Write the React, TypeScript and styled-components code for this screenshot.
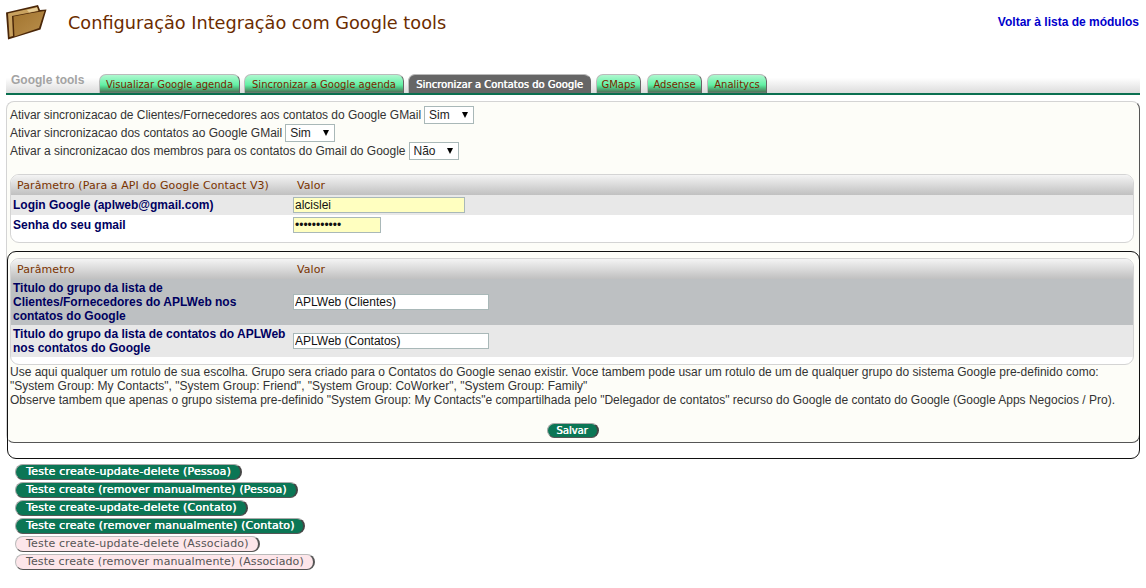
import React from "react";
import styled, { createGlobalStyle } from "styled-components";

const Global = createGlobalStyle`
  html, body { margin: 0; padding: 0; background: #fff; }
  body { font-family: "Liberation Sans", Arial, sans-serif; font-size: 12px; color: #333; }
`;
const Page = styled.div`
  width: 1146px; height: 588px; overflow: hidden; position: relative;
`;
const Header = styled.header`
  height: 71px; display: flex; align-items: flex-start; padding: 4px 7px 0 6px; box-sizing: border-box;
`;
const Logo = styled.svg`
  width: 41px; height: 36px; flex: none;
`;
const Title = styled.h1`
  margin: 7px 0 0 21px; font: normal 17.72px/24px "DejaVu Sans", sans-serif; color: #6b2c00;
`;
const BackLink = styled.a`
  margin: 11px 0 0 auto; font: bold 12px/15px "Liberation Sans", sans-serif; color: #0000cc; text-decoration: none;
`;
const TabBar = styled.nav`
  display: flex; align-items: flex-end; height: 22px; margin: 0 6px; padding-left: 5px;
  border-bottom: 2px solid #0a7050; background: linear-gradient(#fff 0%, #fff 30%, #dcdcdc 100%);
`;
const TabTitle = styled.span`
  font: bold 12px/15px "Liberation Sans", sans-serif; color: #a3a3a3; width: 88px; align-self: flex-start; margin-top: 2px;
`;
const Tab = styled.a<{ $active?: boolean; $w: number; $gap: number }>`
  box-sizing: border-box; width: ${p => p.$w}px; margin-right: ${p => p.$gap}px; height: 19px; text-align: center;
  border-radius: 7px 7px 0 0; border: 1px solid #bbb; border-bottom: 0; border-right-color: #666;
  font: normal 10px/20px "DejaVu Sans", sans-serif;
  white-space: nowrap; overflow: hidden;
  color: ${p => (p.$active ? "#fff" : "#7a1f00")};
  text-shadow: ${p => (p.$active ? "0.4px 0 0 #fff" : "none")};
  background: ${p => (p.$active ? "#666" : "linear-gradient(#b0f8d0 0%, #62f0a4 55%, #50c080 72%, #50805f 92%, #777 100%)")};
`;
const Panel = styled.section`
  position: relative; box-sizing: border-box; height: 342px; margin: 6px 6px 0;
  padding: 4px 5px 0 3px; background: #fdfdf8; border: 1px solid #d4d4d4; border-right-color: #555; border-bottom-color: #555;
  border-radius: 8px;
`;
const OptionRow = styled.div<{ $ls?: number }>`
  height: 18px; display: flex; align-items: center; gap: 3px; color: #333; letter-spacing: ${p => p.$ls ?? 0}px;
`;
const SelectWrap = styled.div`
  position: relative; width: 50px; height: 18px; letter-spacing: 0;
  &::after {
    content: ""; position: absolute; right: 6px; top: 6px; width: 0; height: 0;
    border-left: 3.5px solid transparent; border-right: 3.5px solid transparent; border-top: 6px solid #000; pointer-events: none;
  }
`;
const Select = styled.select`
  appearance: none; width: 100%; height: 100%; box-sizing: border-box; padding: 0 0 0 4px; border: 1px solid #a9b8b8; background: #fff;
  font: 12px "Liberation Sans", sans-serif; color: #222; border-radius: 0;
`;
const ParamTable = styled.div<{ $h: number; $mt: number }>`
  box-sizing: border-box; height: ${p => p.$h}px; margin-top: ${p => p.$mt}px; border: 1px solid #d4d4d4; border-radius: 9px; background: #fff; overflow: hidden;
`;
const THead = styled.div`
  height: 20px; display: grid; grid-template-columns: 280px 1fr; align-items: center; padding-left: 6px;
  background: linear-gradient(#f4f4f4 0%, #c0c0c0 100%);
  font: 11px/22px "DejaVu Sans", sans-serif; letter-spacing: 0.09px; color: #7a3300;
`;
const Row = styled.div<{ $bg: string; $h: number }>`
  height: ${p => p.$h}px; display: grid; grid-template-columns: 281px 1fr; align-items: center; background: ${p => p.$bg}; padding-left: 1px;
`;
const Label = styled.div`
  font: bold 12px/14px "Liberation Sans", sans-serif; color: #000060; padding-left: 1px; width: 278px;
`;
const Input = styled.input<{ $w: number; $bg: string }>`
  box-sizing: border-box; width: ${p => p.$w}px; height: 16px; padding: 0 1px; border: 1px solid #a9b8b8; background: ${p => p.$bg};
  font: 12px "Liberation Sans", sans-serif; color: #111; border-radius: 0; outline: 0;
`;
const DarkBox = styled.div`
  position: relative; box-sizing: border-box; height: 208px; margin: 8px -6px 0 -3px; padding: 6px 5px 0 2px;
  border: 1px solid #111; border-radius: 9px;
`;
const Notes = styled.p`
  margin: 0; font: 12px/14px "Liberation Sans", sans-serif; color: #333; width: 1125px;
`;
const SaveRow = styled.div`
  display: flex; justify-content: center; margin-top: 16px; padding-left: 1px;
`;
const PillButton = styled.button<{ $pink?: boolean; $ls?: number }>`
  box-sizing: border-box; height: 16px; padding: 0 9px 0 10px; border-radius: 8px; cursor: pointer;
  display: block; white-space: nowrap;
  border: 1px solid ${p => (p.$pink ? "#bbb" : "#aaa")}; border-right: 2px solid ${p => (p.$pink ? "#555" : "#444")};
  border-bottom-color: #555;
  background: ${p => (p.$pink ? "#fde6ea" : "#0b7655")}; color: ${p => (p.$pink ? "#555" : "#fff")};
  text-shadow: ${p => (p.$pink ? "none" : "0.4px 0 0 #fff")};
  font: normal 11px/14px "DejaVu Sans", sans-serif; letter-spacing: ${p => p.$ls ?? 0.19}px;
`;
const SaveButton = styled(PillButton)`
  width: 52px; height: 15px; padding: 0; font-size: 10px; letter-spacing: 0;
`;
const TestList = styled.div`
  display: flex; flex-direction: column; gap: 2px; align-items: flex-start; margin: 21px 0 0 15px;
`;

const tabs = [
  { t: "Visualizar Google agenda", w: 141, g: 4 },
  { t: "Sincronizar a Google agenda", w: 160, g: 4 },
  { t: "Sincronizar a Contatos do Google", w: 183, g: 5, a: true },
  { t: "GMaps", w: 45, g: 6 },
  { t: "Adsense", w: 55, g: 5 },
  { t: "Analitycs", w: 60, g: 0 },
];
const tests = [
  { t: "Teste create-update-delete (Pessoa)", ls: 0.19 },
  { t: "Teste create (remover manualmente) (Pessoa)", ls: 0.12 },
  { t: "Teste create-update-delete (Contato)", ls: 0.19 },
  { t: "Teste create (remover manualmente) (Contato)", ls: 0.17 },
  { t: "Teste create-update-delete (Associado)", ls: 0.19, pink: true },
  { t: "Teste create (remover manualmente) (Associado)", ls: 0.11, pink: true },
];

const Folder = () => (
  <Logo viewBox="0 0 41 36">
    <defs>
      <linearGradient id="fg" x1="0" y1="0" x2="1" y2="1">
        <stop offset="0" stopColor="#a2742f" />
        <stop offset="1" stopColor="#b98f4c" />
      </linearGradient>
    </defs>
    <path d="M0 8.5 L32 1 L34 6 L40.5 5.5 L34.5 25.5 L2 35.5 Z" fill="#4a2608" strokeLinejoin="round" />
    <path d="M2 9.5 L31 3 L32.5 7 L6 12 L7 32 L3.5 33 Z" fill="#c9a25f" />
    <path d="M21 6 L31 3.5 L32 6.5 L23 8.5 Z" fill="#e6cd96" />
    <path d="M7.5 12.5 L23 9.5 L38.5 7 L33 24 L8.5 32.5 Z" fill="url(#fg)" />
  </Logo>
);

export default function App() {
  return (
    <Page>
      <Global />
      <Header>
        <Folder />
        <Title>Configuração Integração com Google tools</Title>
        <BackLink href="#">Voltar à lista de módulos</BackLink>
      </Header>
      <TabBar>
        <TabTitle>Google tools</TabTitle>
        {tabs.map(x => (
          <Tab key={x.t} $w={x.w} $gap={x.g} $active={x.a}>{x.t}</Tab>
        ))}
      </TabBar>
      <Panel>
        <OptionRow $ls={-0.025}>
          Ativar sincronizacao de Clientes/Fornecedores aos contatos do Google GMail
          <SelectWrap><Select defaultValue="Sim"><option>Sim</option><option>Não</option></Select></SelectWrap>
        </OptionRow>
        <OptionRow>
          Ativar sincronizacao dos contatos ao Google GMail
          <SelectWrap><Select defaultValue="Sim"><option>Sim</option><option>Não</option></Select></SelectWrap>
        </OptionRow>
        <OptionRow>
          Ativar a sincronizacao dos membros para os contatos do Gmail do Google
          <SelectWrap><Select defaultValue="Não"><option>Sim</option><option>Não</option></Select></SelectWrap>
        </OptionRow>
        <ParamTable $h={69} $mt={14}>
          <THead><span>Parâmetro (Para a API do Google Contact V3)</span><span>Valor</span></THead>
          <Row $bg="#e8e8e8" $h={20}>
            <Label>Login Google (aplweb@gmail.com)</Label>
            <Input $w={172} $bg="#ffffc0" defaultValue="alcislei" />
          </Row>
          <Row $bg="#fff" $h={20}>
            <Label>Senha do seu gmail</Label>
            <Input $w={88} $bg="#ffffc0" type="password" defaultValue="alcisleixxx" />
          </Row>
        </ParamTable>
        <DarkBox>
          <ParamTable $h={107} $mt={0}>
            <THead><span>Parâmetro</span><span>Valor</span></THead>
            <Row $bg="#bdc0c2" $h={46}>
              <Label>Titulo do grupo da lista de<br />Clientes/Fornecedores do APLWeb nos<br />contatos do Google</Label>
              <Input $w={196} $bg="#fff" defaultValue="APLWeb (Clientes)" />
            </Row>
            <Row $bg="#e8e8e8" $h={32}>
              <Label>Titulo do grupo da lista de contatos do APLWeb nos contatos do Google</Label>
              <Input $w={196} $bg="#fff" defaultValue="APLWeb (Contatos)" />
            </Row>
          </ParamTable>
          <Notes>
            Use aqui qualquer um rotulo de sua escolha. Grupo sera criado para o Contatos do Google senao existir. Voce tambem pode usar um rotulo de um de qualquer grupo do sistema Google pre-definido como: "System Group: My Contacts", "System Group: Friend", "System Group: CoWorker", "System Group: Family"<br />
            Observe tambem que apenas o grupo sistema pre-definido "System Group: My Contacts"e compartilhada pelo "Delegador de contatos" recurso do Google de contato do Google (Google Apps Negocios / Pro).
          </Notes>
          <SaveRow><SaveButton>Salvar</SaveButton></SaveRow>
        </DarkBox>
      </Panel>
      <TestList>
        {tests.map(x => (
          <PillButton key={x.t} $pink={x.pink} $ls={x.ls}>{x.t}</PillButton>
        ))}
      </TestList>
    </Page>
  );
}
